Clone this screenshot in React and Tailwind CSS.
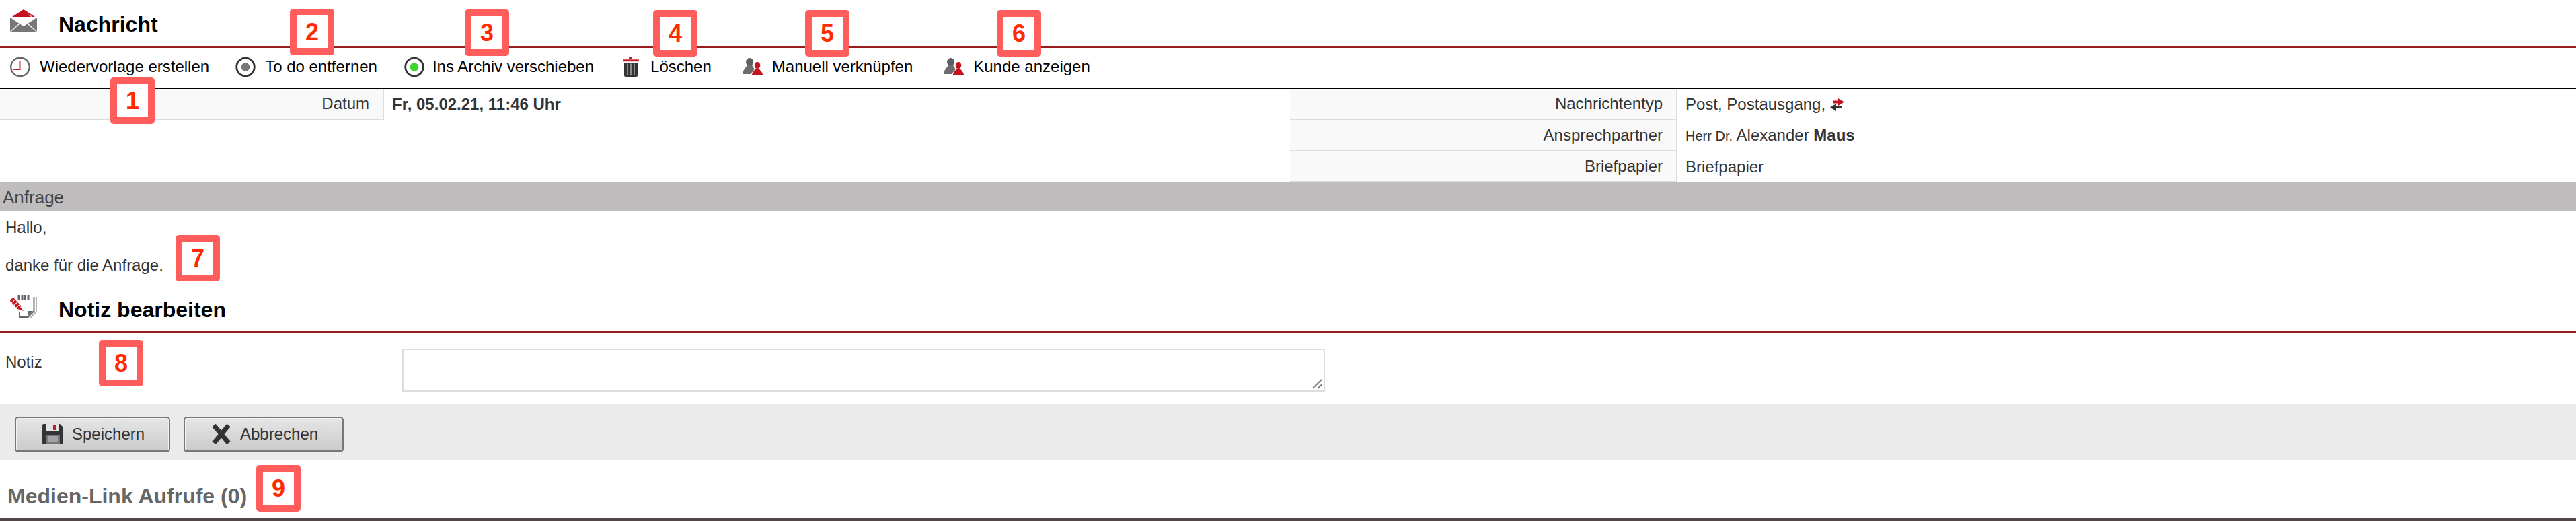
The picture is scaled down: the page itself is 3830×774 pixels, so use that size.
const font = "font-['Liberation_Sans',Arial,sans-serif]";

function Envelope() {
  return (
    <svg width="40" height="34" viewBox="0 0 40 34" className="shrink-0">
      <polygon points="20,0 3,11 37,11" fill="#c5121f" />
      <polygon points="5,11 35,11 33,14 20,22 7,14" fill="#ffffff" />
      <polygon points="0,12 20,25 40,12 40,33 0,33" fill="#77777a" />
      <path d="M0.5 33 L14 21 M39.5 33 L26 21" stroke="#ffffff" strokeWidth="1.2" />
      <path d="M27 8 L33 11 L31 13" fill="none" stroke="#ffffff" strokeWidth="1" />
    </svg>
  );
}
function NoteIcon() {
  return (
    <svg width="40" height="36" viewBox="0 0 40 36" className="shrink-0">
      <path d="M13 1v7M18 1v7M22.500 1v7M27 1v7" stroke="#66666a" strokeWidth="3" />
      <path d="M35.500 4v21l-9 9H14v-7" fill="none" stroke="#66666a" strokeWidth="2" />
      <path d="M39 4v22l-9 9" fill="none" stroke="#a0a0a0" strokeWidth="1.600" />
      <polygon points="27,25 34,25 27,32" fill="#66666a" />
      <path d="M2 7 L14 20" stroke="#cf1420" strokeWidth="7" strokeDasharray="4 1" />
      <polygon points="13,17 20.500,25 11,22" fill="#cf1420" />
    </svg>
  );
}
function Clock() {
  return (
    <svg width="30" height="31" viewBox="0 0 30 31">
      <circle cx="15" cy="15.500" r="13.800" fill="#fff" stroke="#66666a" strokeWidth="2.400" />
      <path d="M14.500 6v13H5" fill="none" stroke="#c8202a" strokeWidth="2" />
    </svg>
  );
}
function Radio({ color }) {
  return (
    <svg width="30" height="31" viewBox="0 0 30 31">
      <circle cx="15" cy="15.500" r="13.300" fill="#fff" stroke="#333333" strokeWidth="2.800" />
      <circle cx="15" cy="15.500" r="6.300" fill={color} />
    </svg>
  );
}
function Trash() {
  return (
    <svg width="24" height="29" viewBox="0 0 24 29">
      <rect x="9" y="0" width="5" height="2.500" fill="#c8202a" />
      <rect x="0" y="3.300" width="24" height="3" rx="1" fill="#c8202a" />
      <path d="M2 8h20v19a2 2 0 0 1-2 2H4a2 2 0 0 1-2-2z" fill="#333336" />
      <path d="M7 9.500v17M12 9.500v17M17 9.500v17" stroke="#bbbbbb" strokeWidth="1.300" />
    </svg>
  );
}
function Users() {
  return (
    <svg width="30" height="26" viewBox="0 0 30 26">
      <ellipse cx="10.500" cy="6" rx="5.500" ry="6" fill="#5f5f62" />
      <path d="M7 10h7c1 4 6 8 6 14H0c0-6 6-10 7-14z" fill="#6d6d70" />
      <ellipse cx="22" cy="11" rx="5.300" ry="6" fill="#fff" />
      <path d="M12 26c1-5 5-7 6-10h8c1 3 4 5 4 10z" fill="#fff" />
      <ellipse cx="22" cy="11" rx="4.300" ry="5" fill="#c5121f" />
      <path d="M14 25.500c0-5 4-6 5.500-10h5c1.500 4 5.500 5 5.500 10z" fill="#c5121f" />
    </svg>
  );
}
function Swap() {
  return (
    <svg width="21" height="19" viewBox="0 0 21 19" className="shrink-0">
      <polygon points="4,3.500 12,3.500 12,0 21,5.500 12,11 12,7.500 4,7.500" fill="#c5121f" />
      <polygon points="17,11 9,11 9,8 0,13.500 9,19 9,15 17,15" fill="#333336" />
    </svg>
  );
}
function Save() {
  return (
    <svg width="31" height="30" viewBox="0 0 31 30" className="shrink-0">
      <path d="M2 0h24l5 5v23a2 2 0 0 1-2 2H2a2 2 0 0 1-2-2V2a2 2 0 0 1 2-2z" fill="#333336" />
      <rect x="6" y="0" width="19" height="11" fill="#e3e3e3" />
      <rect x="16" y="2" width="4" height="7" fill="#b3232b" />
      <rect x="5" y="16" width="21" height="14" fill="#77777a" />
      <path d="M8 19h15M8 22h15M8 25h15" stroke="#cfcfcf" strokeWidth="1.200" />
    </svg>
  );
}
function Cross() {
  return (
    <svg width="30" height="30" viewBox="0 0 30 30" className="shrink-0">
      <path d="M4 2 L26 28 M26 2 L4 28" stroke="#333336" strokeWidth="7" />
    </svg>
  );
}

function Badge({ n, pos }) {
  return (
    <div
      className={`absolute ${pos} w-[66px] h-[69px] flex items-center justify-center rounded-[5px] border-[10px] border-[#ff5c5c] bg-white text-[36px] leading-none font-bold text-[#ff2a00]`}
    >
      {n}
    </div>
  );
}

function Tool({ icon, label, className, gap = "gap-[14px]", box = "w-[30px]" }) {
  return (
    <div className={`flex items-center ${gap} ${className}`}>
      <span className={`flex ${box} justify-center`}>{icon}</span>
      <span>{label}</span>
    </div>
  );
}

function Row({ label, children, h = "h-[46px]", labelW = "w-[571px]" }) {
  return (
    <div className={`flex ${h}`}>
      <div className={`${labelW} shrink-0 box-border flex items-center justify-end pr-[20px] pb-[1px] bg-[#f9f9f9] border-r-2 border-b-2 border-[#dddddd]`}>
        {label}
      </div>
      <div className="flex items-center pl-[12px] pb-[1px]">{children}</div>
    </div>
  );
}

function Button({ icon, label, w }) {
  return (
    <button className={`${w} h-[53px] box-border flex items-center gap-[13px] pl-[39px] rounded-[5px] border-2 border-b-[3px] border-[#77777a] shadow-[inset_0_0_0_1px_#f2f2f2] bg-gradient-to-b from-[#e6e6e6] to-[#cbcbcb] text-[24px] leading-[28px] text-[#333333]`}>
      {icon}
      <span>{label}</span>
    </button>
  );
}

export default function App() {
  return (
    <div className={`relative w-[3830px] h-[774px] overflow-hidden bg-white ${font} text-[24px] leading-[28px] text-[#333333]`}>
      {/* Title */}
      <div className="h-[72px] box-border border-b-4 border-[#9b1c1c] flex items-start pl-[15px] pt-[14px] gap-[32px] text-black">
        <Envelope />
        <h1 className="text-[32px] leading-[36px] font-bold mt-[4px]">Nachricht</h1>
      </div>

      {/* Toolbar */}
      <div className="h-[60px] box-border border-b-2 border-black flex items-center pl-[15px] pb-[4px] text-black">
        <Tool icon={<Clock />} label="Wiedervorlage erstellen" />
        <Tool icon={<Radio color="#77777a" />} label="To do entfernen" className="ml-[39px]" />
        <Tool icon={<Radio color="#3bd62e" />} label="Ins Archiv verschieben" gap="gap-[12px]" className="ml-[40px]" />
        <Tool icon={<Trash />} label="Löschen" className="ml-[40px]" />
        <Tool icon={<Users />} label="Manuell verknüpfen" className="ml-[46px]" />
        <Tool icon={<Users />} label="Kunde anzeigen" className="ml-[46px]" />
      </div>

      {/* Details */}
      <div className="grid grid-cols-[1918px_1fr] h-[139px]">
        <div>
          <Row label="Datum" h="h-[47px]">
            <span className="font-bold">Fr, 05.02.21, 11:46 Uhr</span>
          </Row>
        </div>
        <div>
          <Row label="Nachrichtentyp" h="h-[47px]" labelW="w-[576px]">
            <span className="flex items-center gap-[7px]">Post, Postausgang, <Swap /></span>
          </Row>
          <Row label="Ansprechpartner" labelW="w-[576px]">
            <span>
              <span className="text-[20px]">Herr Dr. </span>Alexander <b>Maus</b>
            </span>
          </Row>
          <Row label="Briefpapier" labelW="w-[576px]">
            <span>Briefpapier</span>
          </Row>
        </div>
      </div>

      {/* Message */}
      <div className="h-[43px] bg-[#bfbdbe] pl-[4px] flex items-center text-[26px] text-[#444444]">Anfrage</div>
      <div className="pl-[8px] pt-[10px]">
        <p>Hallo,</p>
        <p className="mt-[28px]">danke für die Anfrage.</p>
      </div>

      {/* Note title */}
      <div className="h-[87px] box-border border-b-4 border-[#9b1c1c] flex items-start pl-[15px] pt-[29px] gap-[32px] text-black">
        <NoteIcon />
        <h2 className="text-[32px] leading-[36px] font-bold mt-[5px]">Notiz bearbeiten</h2>
      </div>

      {/* Form */}
      <div className="h-[105px] flex items-start pt-[23px] pl-[8px]">
        <label className="w-[590px] pt-[6px]">Notiz</label>
        <div className="relative w-[1372px] h-[64px]">
          <textarea className="block w-full h-full box-border border-2 border-[#dddddd] bg-white resize-none" />
          <svg width="16" height="16" viewBox="0 0 16 16" className="absolute right-[3px] bottom-[3px]">
            <path d="M1 13.500 L14 1 M8.500 14 L14.500 8" stroke="#77777a" strokeWidth="1.800" />
          </svg>
        </div>
      </div>

      {/* Actions */}
      <div className="h-[83px] bg-[#ebebeb] flex items-start pt-[19px] pl-[22px] gap-[20px]">
        <Button icon={<Save />} label="Speichern" w="w-[231px]" />
        <Button icon={<Cross />} label="Abbrechen" w="w-[238px]" />
      </div>

      {/* Footer section */}
      <div className="h-[91px] box-border border-b-[5px] border-[#514747] pl-[11px] pt-[36px]">
        <h3 className="text-[32px] leading-[36px] font-bold text-[#666666]">Medien-Link Aufrufe (0)</h3>
      </div>

      <Badge n="1" pos="left-[164px] top-[115px]" />
      <Badge n="2" pos="left-[431px] top-[13px]" />
      <Badge n="3" pos="left-[691px] top-[14px]" />
      <Badge n="4" pos="left-[971px] top-[15px]" />
      <Badge n="5" pos="left-[1197px] top-[15px]" />
      <Badge n="6" pos="left-[1482px] top-[15px]" />
      <Badge n="7" pos="left-[261px] top-[349px]" />
      <Badge n="8" pos="left-[147px] top-[505px]" />
      <Badge n="9" pos="left-[381px] top-[691px]" />
    </div>
  );
}
